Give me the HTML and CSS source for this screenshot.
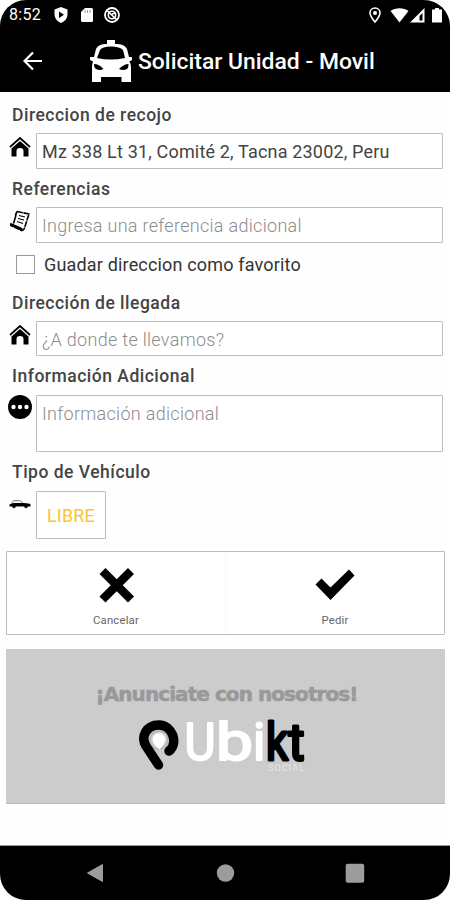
FILE: index.html
```html
<!DOCTYPE html>
<html lang="es">
<head>
    <meta charset="UTF-8">
    <meta name="viewport" content="width=device-width, initial-scale=1.0">
    <title>Solicitar Unidad - Movil</title>
    <link rel="stylesheet" href="styles.css">
</head>
<body>
    <div class="phone">
        <header class="header">
            <div class="status-bar">
                <span class="time">8:52</span>
                <svg class="status-left" width="68" height="18" viewBox="0 0 68 18" fill="#fff">
                    <path d="M8 1L14.500 3.500V8C14.500 12 12 15.500 8 17C4 15.500 1.500 12 1.500 8V3.500Z"/>
                    <path d="M6 5.500L11 8.700L6 12Z" fill="#000"/>
                    <path d="M32 2H38.500Q40 2 40 3.500V14.500Q40 16 38.500 16H29.500Q28 16 28 14.500V6Z"/>
                    <path d="M32 4V7M34.500 4V7M37 4V7" stroke="#999" stroke-width="1"/>
                    <circle cx="59" cy="9" r="7" fill="none" stroke="#fff" stroke-width="1.800"/>
                    <circle cx="59" cy="9" r="3.700" fill="none" stroke="#fff" stroke-width="1.600"/>
                    <path d="M54 4.500L64 14M59 8L63 7" stroke="#fff" stroke-width="1.700"/>
                </svg>
                <svg class="status-right" width="76" height="18" viewBox="0 0 76 18" fill="#fff">
                    <path d="M8 2C11 2 13 4.200 13 7C13 10 10.500 13 8 16C5.500 13 3 10 3 7C3 4.200 5 2 8 2Z" fill="none" stroke="#fff" stroke-width="1.600"/>
                    <circle cx="8" cy="7" r="2"/>
                    <path d="M23.500 5C28.500 1.300 36.500 1.300 41.500 5L32.500 16.500Z"/>
                    <path d="M57.500 2V16.500H43Z"/>
                    <path d="M55.500 7V14.500H52.500V10Z" fill="#000"/>
                    <path d="M68 2H72V3.500H75V16.500H65V3.500H68Z"/>
                </svg>
            </div>
            <div class="title-bar">
                <svg class="back" width="20" height="20" viewBox="0 0 20 20" fill="none" stroke="#fff" stroke-width="2.200">
                    <path d="M19 10H2M10 1.500L1.500 10L10 18.500"/>
                </svg>
                <svg class="taxi" width="42" height="42" viewBox="0 0 42 42" fill="#fff">
                    <path d="M17 0H25V4C31 4 35 5 37 9L39 17H42V20L39.500 21.500Q41 24 41 27V42H31.500V37H11V42H2V27Q2 24 3 21.500L0 20V17H4L6 9C8 5 12 4 17 4Z"/>
                    <path d="M10 10Q12 6.500 21 6.500T33 10L35 18Q21 21 7 18Z" fill="#000"/>
                    <path d="M4 24Q9 24 13.500 29Q10 31 6 29Q4 28 4 24ZM38.500 24Q34 24 29 29Q33 31 37 29Q38.500 28 38.500 24Z" fill="#000"/>
                </svg>
                <h1>Solicitar Unidad - Movil</h1>
            </div>
        </header>

        <main class="form">
            <label class="label pickup-label" for="pickup">Direccion de recojo</label>
            <div class="row">
                <svg class="icon" width="22" height="22" viewBox="0 0 22 22">
                    <path d="M1 11L11 2L21 11" fill="none" stroke="#000" stroke-width="1.700"/>
                    <path d="M2.500 12.500L11 5L19.500 12.500V20.500H14.500V15Q14.500 12 11 12T7.500 15V20.500H2.500Z"/>
                </svg>
                <input class="field" id="pickup" type="text" value="Mz 338 Lt 31, Comité 2, Tacna 23002, Peru">
            </div>

            <label class="label ref-label" for="reference">Referencias</label>
            <div class="row">
                <svg class="icon" width="22" height="22" viewBox="0 0 22 22" fill="none" stroke="#000" stroke-width="1.600">
                    <path d="M8 1.500L20 4Q19 7 18 10L15.500 18Q14 21.500 11.500 20L2 15.500Q1 14 2.500 13.500" stroke-dasharray="6 .6"/>
                    <path d="M2 14.500L11.500 18.500L13 20" stroke-width="2.600"/>
                    <path d="M8 1.500Q6.500 4 6.500 7L4.500 13.500"/>
                    <path d="M10 5.500L16 7M9 8.500L15 10M8 11.500L14 13.500" stroke-width="1.200"/>
                </svg>
                <input class="field" id="reference" type="text" placeholder="Ingresa una referencia adicional">
            </div>

            <label class="favorite">
                <input class="checkbox" type="checkbox">
                <span>Guadar direccion como favorito</span>
            </label>

            <label class="label dest-label" for="destination">Dirección de llegada</label>
            <div class="row">
                <svg class="icon" width="22" height="22" viewBox="0 0 22 22">
                    <path d="M1 11L11 2L21 11" fill="none" stroke="#000" stroke-width="1.700"/>
                    <path d="M2.500 12.500L11 5L19.500 12.500V20.500H14.500V15Q14.500 12 11 12T7.500 15V20.500H2.500Z"/>
                </svg>
                <input class="field short" id="destination" type="text" placeholder="¿A donde te llevamos?">
            </div>

            <label class="label info-label" for="info">Información Adicional</label>
            <div class="row">
                <svg class="icon dots" width="24" height="24" viewBox="0 0 24 24">
                    <circle cx="12" cy="12" r="12"/>
                    <circle cx="5.500" cy="12" r="2.200" fill="#fff"/>
                    <circle cx="12" cy="12" r="2.200" fill="#fff"/>
                    <circle cx="18.500" cy="12" r="2.200" fill="#fff"/>
                </svg>
                <textarea class="field area" id="info" placeholder="Información adicional"></textarea>
            </div>

            <div class="label type-label">Tipo de Vehículo</div>
            <div class="row">
                <svg class="icon car" width="22" height="10" viewBox="0 0 22 10">
                    <path d="M.500 5.500Q2 4 5 4H15Q20 4 21.500 5.500V7.500H.500Z"/>
                    <path d="M3 4L4.500 1.700H11L14 4" fill="none" stroke="#777" stroke-width="1"/>
                    <circle cx="5" cy="7.500" r="1.700"/>
                    <circle cx="17" cy="7.500" r="1.700"/>
                </svg>
                <button class="type-button">LIBRE</button>
            </div>
        </main>

        <div class="actions">
            <button class="action">
                <svg width="40" height="40" viewBox="0 0 40 40">
                    <path d="M9.500 9L32 31.500M32 9L9.500 31.500" stroke="#000" stroke-width="8.500" stroke-linecap="square"/>
                </svg>
                <span>Cancelar</span>
            </button>
            <button class="action">
                <svg width="40" height="40" viewBox="0 0 40 40">
                    <path d="M.500 19.500L6.500 13.500L15.500 22.500L34 4.500L39.500 10.500L15.500 35Z"/>
                </svg>
                <span>Pedir</span>
            </button>
        </div>

        <section class="banner">
            <p class="banner-text">¡Anunciate con nosotros!</p>
            <svg class="brand" width="170" height="54" viewBox="0 0 170 54">
                <path d="M30 31C40 23 33 5 20 5C7 5 1.500 17 7 26L19.500 45" fill="none" stroke="#000" stroke-width="9.500" stroke-linejoin="round" stroke-linecap="round"/>
                <circle cx="20" cy="20" r="9" fill="#ccc" stroke="#aaa" stroke-width="1"/>
                <path d="M13.500 19.500A6.500 6.500 0 0 1 26.500 19.500Q26 23.500 20.500 29.500Q14 24.500 13.500 19.500Z" fill="#fff"/>
                <text class="word light" x="45.500" y="40" textLength="31" lengthAdjust="spacingAndGlyphs">U</text>
                <text class="word light" x="77" y="40" textLength="37" lengthAdjust="spacingAndGlyphs">b</text>
                <text class="word light" x="114" y="40">i</text>
                <text class="word dark" x="127" y="40" textLength="22" lengthAdjust="spacingAndGlyphs">k</text>
                <text class="word dark" x="149.500" y="40" textLength="16" lengthAdjust="spacingAndGlyphs">t</text>
                <text class="tag" y="51" x="129" textLength="36">SOCIAL</text>
            </svg>
        </section>

        <nav class="nav-bar">
            <svg width="20" height="20" viewBox="0 0 20 20" fill="#9c9c9c"><path d="M2.500 10L17.500 1.500V18.500Z" stroke="#9c9c9c" stroke-linejoin="round"/></svg>
            <svg width="20" height="20" viewBox="0 0 20 20" fill="#9c9c9c"><circle cx="10.500" cy="10" r="8.700"/></svg>
            <svg width="20" height="20" viewBox="0 0 20 20" fill="#9c9c9c"><rect x=".7" y=".8" width="18.500" height="19" rx="2"/></svg>
        </nav>
    </div>
</body>
</html>
```
FILE: styles.css
```css
* {
    box-sizing: border-box;
}
body {
    margin: 0;
    background: #fff;
    font-family: Roboto, "Liberation Sans", sans-serif;
}
.phone {
    display: flex;
    flex-direction: column;
    width: 450px;
    height: 900px;
    overflow: hidden;
    border-radius: 26px;
    background: #fefefe;
}
.header {
    height: 92px;
    background: #000;
    color: #fff;
}
.status-bar {
    display: flex;
    align-items: center;
    height: 29px;
    padding: 0 7px 0 9px;
}
.time {
    width: 44px;
    font-size: 16px;
    letter-spacing: 0.3px;
}
.status-right {
    margin-left: auto;
}
.title-bar {
    display: flex;
    align-items: center;
    height: 63px;
    padding: 1px 0 0 23px;
}
.taxi {
    margin: 0 6px 0 47px;
}
h1 {
    margin: 0;
    font-size: 22.9px;
    font-weight: 500;
    white-space: nowrap;
}
.form {
    padding: 5px 7px 0 8px;
}
.label {
    display: flex;
    align-items: center;
    height: 38px;
    padding-left: 4px;
    color: #444;
    font-size: 17.5px;
    font-weight: 500;
    letter-spacing: 0.5px;
}
.pickup-label {
    height: 36px;
}
.ref-label {
    padding-top: 1px;
}
.dest-label {
    height: 36px;
}
.info-label, .type-label {
    height: 39px;
    padding-top: 1px;
}
.row {
    display: flex;
    align-items: flex-start;
}
.icon {
    flex: none;
    width: 28px;
    padding-right: 4px;
    margin-top: 3px;
}
.dots {
    margin-top: 0;
}
.car {
    margin-top: 8px;
}
.field {
    display: block;
    flex: 1;
    min-width: 0;
    height: 36px;
    padding: 1px 5px 0;
    border: 1px solid #bdbdbd;
    border-radius: 1px;
    outline: none;
    background: #fff;
    color: #444;
    font: 300 18px Roboto, "Liberation Sans", sans-serif;
    letter-spacing: 0.3px;
}
.field::placeholder {
    color: #8c8c8c;
}
#pickup {
    font-weight: 400;
    letter-spacing: 0.17px;
}
.short {
    height: 35px;
}
.area {
    height: 57px;
    padding-top: 7px;
    resize: none;
    overflow: hidden;
}
.favorite {
    display: flex;
    align-items: center;
    gap: 8px;
    height: 42px;
    padding-left: 8px;
    color: #333;
    font-size: 18px;
    letter-spacing: 0.17px;
}
.checkbox {
    appearance: none;
    width: 19px;
    height: 19px;
    margin: 0 1px 0 0;
    border: 1px solid #999;
    background: #fff;
}
button {
    margin: 0;
    font-family: inherit;
}
.type-button {
    width: 70px;
    height: 48px;
    padding: 0;
    border: 1px solid #bdbdbd;
    border-radius: 1px;
    background: #fff;
    color: #fcc52f;
    font-size: 18px;
    letter-spacing: 0.2px;
}
.actions {
    display: flex;
    height: 84px;
    margin: 12px 5px 0 6px;
    border: 1px solid #bdbdbd;
    border-radius: 1px;
    background: #fff;
}
.action {
    display: flex;
    flex: 1;
    flex-direction: column;
    align-items: center;
    gap: 9px;
    padding: 13px 0 0;
    border: 0;
    background: none;
    color: #666;
    font-size: 11.3px;
    letter-spacing: 0.2px;
}
.action + .action {
    border-left: 1px solid #f8f8f8;
}
.banner {
    display: flex;
    flex-direction: column;
    align-items: center;
    height: 155px;
    margin: 14px 5px 0 6px;
    border-bottom: 1px solid #bbb;
    background: #ccc;
}
.banner-text {
    margin: 31px 0 0;
    padding-left: 2px;
    color: #999;
    font: bold 20px/28px "DejaVu Sans", sans-serif;
    letter-spacing: -0.93px;
    -webkit-text-stroke: 0.6px #999;
    white-space: nowrap;
}
.brand {
    margin: 12px 0 0 -4px;
    overflow: visible;
}
.word {
    font-family: Roboto, sans-serif;
    font-size: 51px;
    stroke-linejoin: round;
}
.light {
    fill: #fff;
    stroke: #fff;
    stroke-width: 2px;
}
.dark {
    fill: #000;
    stroke: #000;
    stroke-width: 3px;
}
.tag {
    fill: #e6e6e6;
    font-size: 9px;
}
.nav-bar {
    display: flex;
    align-items: center;
    justify-content: space-between;
    height: 55px;
    margin-top: auto;
    padding: 0 85px;
    border-top: 1px solid #999;
    background: #000;
}
```
